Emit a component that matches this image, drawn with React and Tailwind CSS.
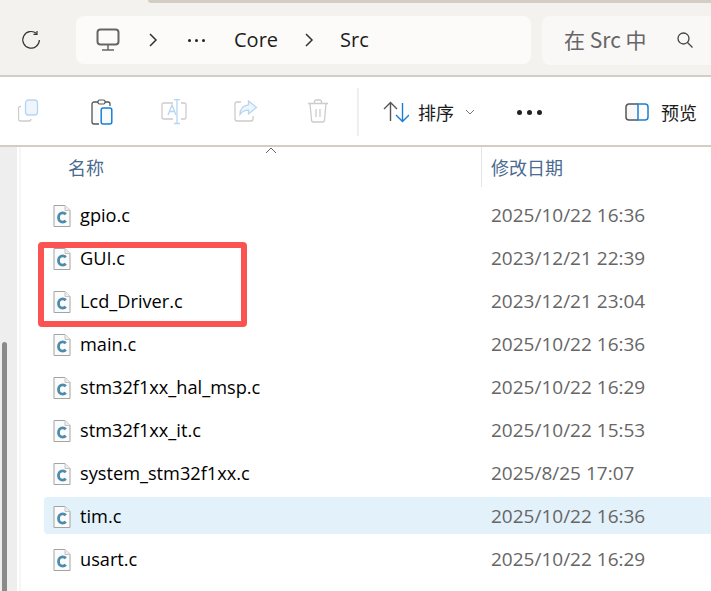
const FILES = [
  { name: 'gpio.c', date: '2025/10/22 16:36' },
  { name: 'GUI.c', date: '2023/12/21 22:39' },
  { name: 'Lcd_Driver.c', date: '2023/12/21 23:04' },
  { name: 'main.c', date: '2025/10/22 16:36' },
  { name: 'stm32f1xx_hal_msp.c', date: '2025/10/22 16:29' },
  { name: 'stm32f1xx_it.c', date: '2025/10/22 15:53' },
  { name: 'system_stm32f1xx.c', date: '2025/8/25 17:07' },
  { name: 'tim.c', date: '2025/10/22 16:36', selected: true },
  { name: 'usart.c', date: '2025/10/22 16:29' },
];

function CFileIcon() {
  return (
    <svg width="18" height="22" viewBox="0 0 18 22" fill="none">
      <path d="M1 .5h11L17 5.500v16H1z" fill="#fbfbfb" stroke="#a3a3a3" />
      <path d="M12 .5v5h5" fill="#eee" stroke="#c4c4c4" />
      <path d="M12.800 9.200C12 8.300 11 7.900 9.700 7.900 7.200 7.900 5.500 9.800 5.500 12.500 5.500 15.200 7.200 17.100 9.700 17.100 11 17.100 12 16.700 12.800 15.800" stroke="#4b8cac" strokeWidth="2.800" />
    </svg>
  );
}

function ToolButton({ children }) {
  return <div className="flex w-[72px] justify-center">{children}</div>;
}

export default function App() {
  return (
    <div className="h-[591px] w-[711px] overflow-hidden bg-white font-['Noto_Sans_CJK_SC','Open_Sans',sans-serif] text-[#1c1c1c]">
      {/* Address bar */}
      <div className="relative flex h-[77px] items-center border-b-2 border-[#d3cdc3] bg-[#f3f2ef] pt-[5px]">
        <div className="absolute left-[148px] right-0 top-0 h-[3px] rounded-bl bg-[#d3cdc3]" />
        <div className="flex w-[76px] shrink-0 justify-center pr-[14px]">
          <svg width="20" height="20" viewBox="0 0 20 20" fill="none" stroke="#333" strokeWidth="1.200">
            <path d="M15.500 3.500A8.300 8.300 0 1 0 18.400 10" />
            <path d="M16 .9v3.400h-3.500" />
          </svg>
        </div>
        <div className="flex h-[48px] w-[455px] items-center rounded-lg bg-[#fcfbf9] text-[20px]">
          <svg className="ml-[20px]" width="24" height="24" viewBox="0 0 24 24" fill="none" stroke="#666" strokeWidth="2">
            <rect x="1.500" y="1.500" width="21" height="15" rx="3" />
            <path d="M12 17v5M6 22h12" strokeWidth="1.500" />
          </svg>
          <svg className="ml-[28px]" width="10" height="14" viewBox="0 0 10 14" fill="none" stroke="#333" strokeWidth="1.500">
            <path d="M2 1l6 6-6 6" />
          </svg>
          <div className="ml-[30px] flex gap-[4px]">
            <span className="h-[3px] w-[3px] rounded-full bg-[#222]" />
            <span className="h-[3px] w-[3px] rounded-full bg-[#222]" />
            <span className="h-[3px] w-[3px] rounded-full bg-[#222]" />
          </div>
          <span className="ml-[29px] font-['Open_Sans']">Core</span>
          <svg className="ml-[26px]" width="10" height="14" viewBox="0 0 10 14" fill="none" stroke="#333" strokeWidth="1.500">
            <path d="M2 1l6 6-6 6" />
          </svg>
          <span className="ml-[26px] font-['Open_Sans']">Src</span>
        </div>
        <div className="ml-[11px] flex h-[49px] flex-1 items-center rounded-l-lg bg-[#f9f8f6] pl-[22px] text-[21px] text-[#666]">
          <span>在 Src 中</span>
          <svg className="ml-[29px]" width="18" height="18" viewBox="0 0 18 18" fill="none" stroke="#444" strokeWidth="1.300">
            <circle cx="7.500" cy="7.500" r="5.500" />
            <path d="M11.500 11.500l5 5" />
          </svg>
        </div>
      </div>

      {/* Command bar */}
      <div className="flex h-[70px] items-center border-b-2 border-[#d3cdc3] bg-white pt-[2px]">
        <div className="ml-[-6px] flex">
          <ToolButton>
            <svg width="24" height="24" viewBox="0 0 24 24" fill="none" strokeWidth="1.300">
              <path d="M3 7.500h-.5a2 2 0 0 0-2 2V20a2 2 0 0 0 2 2H11a2 2 0 0 0 2-2" stroke="#ccc" />
              <rect x="7.500" y="1" width="12" height="15" rx="3" stroke="#b5d6f2" fill="#eef6fc" />
            </svg>
          </ToolButton>
          <ToolButton>
            <svg width="24" height="26" viewBox="0 0 24 26" fill="none">
              <path d="M8 3H4a2 2 0 0 0-2 2v18a2 2 0 0 0 2 2h5" stroke="#555" strokeWidth="1.300" fill="#fafafa" />
              <path d="M15 3h3a2 2 0 0 1 2 2v2" stroke="#555" strokeWidth="1.300" />
              <rect x="8" y="1" width="7" height="4" rx="1.500" stroke="#555" strokeWidth="1.200" fill="#fff" />
              <rect x="11.200" y="9" width="10.600" height="16" rx="2" stroke="#1a7fd4" strokeWidth="1.500" fill="#f7fbfe" />
            </svg>
          </ToolButton>
          <ToolButton>
            <svg width="26" height="26" viewBox="0 0 26 26" fill="none" strokeWidth="1.300">
              <path d="M12 4H3a2 2 0 0 0-2 2v12a2 2 0 0 0 2 2h9M20 4h3a2 2 0 0 1 2 2v12a2 2 0 0 1-2 2h-3" stroke="#ccc" />
              <path d="M13 .5h6M13 24.500h6M16 .5v24" stroke="#b5d6f2" />
              <path d="M7 16l4-10 4 10M8.500 12.500h5" stroke="#b5d6f2" />
            </svg>
          </ToolButton>
          <ToolButton>
            <svg width="24" height="24" viewBox="0 0 24 24" fill="none" strokeWidth="1.300">
              <path d="M7 3H3a2 2 0 0 0-2 2v15a2 2 0 0 0 2 2h14a2 2 0 0 0 2-2v-3" stroke="#ccc" />
              <path d="M14.500 2l8 6.500-8 6.500v-3.800c-4 0-6.500 1.300-8.500 4.300 0-5.500 3-9 8.500-9.700z" stroke="#b5d6f2" fill="#eef6fc" />
            </svg>
          </ToolButton>
          <ToolButton>
            <svg width="22" height="24" viewBox="0 0 22 24" fill="none" stroke="#ccc" strokeWidth="1.300">
              <path d="M1 4.500h20M7.500 4.500V3a2 2 0 0 1 2-2h3a2 2 0 0 1 2 2v1.500" />
              <path d="M3 4.500l1.500 16.500a2 2 0 0 0 2 2h9a2 2 0 0 0 2-2L19 4.500M9 10v8M13 10v8" />
            </svg>
          </ToolButton>
        </div>
        <div className="ml-[3px] h-[48px] w-[2px] bg-[#eeeeee]" />
        <svg className="ml-[24px]" width="26" height="22" viewBox="0 0 26 22" fill="none" strokeWidth="1.400">
          <path d="M1 8l6.500-6.500L14 8M7.500 1.500V20" stroke="#555" />
          <path d="M13 14l6.500 6.500L26 14M19.500 2v18" stroke="#1a7fd4" />
        </svg>
        <span className="ml-[9px] text-[18px] leading-none">排序</span>
        <svg className="ml-[11px]" width="10" height="6" viewBox="0 0 10 6" fill="none" stroke="#777">
          <path d="M1 1l4 4 4-4" />
        </svg>
        <div className="ml-[42px] flex gap-[5px]">
          <span className="h-[5px] w-[5px] rounded-full bg-[#222]" />
          <span className="h-[5px] w-[5px] rounded-full bg-[#222]" />
          <span className="h-[5px] w-[5px] rounded-full bg-[#222]" />
        </div>
        <svg className="ml-[83px]" width="24" height="18" viewBox="0 0 24 18" fill="none" strokeWidth="1.500">
          <path d="M13 1H4a3 3 0 0 0-3 3v10a3 3 0 0 0 3 3h9" stroke="#555" fill="#f8f8f8" />
          <path d="M13 1h7a3 3 0 0 1 3 3v10a3 3 0 0 1-3 3h-7z" stroke="#1a7fd4" />
        </svg>
        <span className="ml-[12px] text-[18px] leading-none">预览</span>
      </div>

      {/* File list */}
      <div className="flex h-[444px]">
        <div className="relative w-[17px] shrink-0 bg-[#eeeeee]">
          <div className="absolute left-[2px] top-[195px] h-[249px] w-[5px] rounded-t-full bg-[#8a8a8a]" />
        </div>
        <div className="w-[2px] shrink-0 bg-white" />
        <div className="w-[2px] shrink-0 bg-[#f6f6f6]" />
        <div className="relative min-w-0 flex-1">
          <div className="flex h-[40px]">
            <div className="w-[460px] pl-[47px] pt-[7px] text-[18px] leading-[26px] text-[#4a6a8f]">名称</div>
            <div className="border-l border-[#e4e4e4] pl-[9px] pt-[7px] text-[18px] leading-[26px] text-[#4a6a8f]">修改日期</div>
          </div>
          <svg className="absolute left-[244px] top-0" width="12" height="7" viewBox="0 0 12 7" fill="none" stroke="#666">
            <path d="M1 6l5-5 5 5" />
          </svg>
          <div className="ml-[23px] mt-[9px] flex flex-col gap-[6px]">
            {FILES.map((f) => (
              <div key={f.name} className={`flex h-[37px] items-center rounded-l pt-[2px] ${f.selected ? 'bg-[#e3f1fb]' : ''}`}>
                <div className="ml-[9px] flex w-[27px] shrink-0">
                  <CFileIcon />
                </div>
                <span className="w-[411px] shrink-0 font-['Open_Sans'] text-[18.2px] text-black">{f.name}</span>
                <span className="whitespace-nowrap font-['Open_Sans'] text-[19px] text-[#666]">{f.date}</span>
              </div>
            ))}
          </div>
          <div className="absolute left-[17px] top-[95px] h-[85px] w-[209px] rounded border-[6px] border-[#fb5252]" />
        </div>
      </div>
    </div>
  );
}
